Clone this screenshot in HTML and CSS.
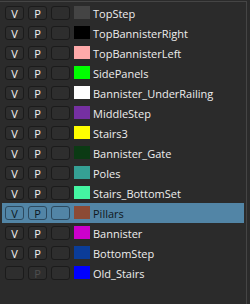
FILE: index.html
```html
<!DOCTYPE html>
<html>
<head>
<meta charset="utf-8">
<link rel="stylesheet" href="styles.css">
</head>
<body>
<div class="panel">
  <div class="list">
    <div class="row"><span class="btn">V</span><span class="btn">P</span><span class="btn"></span><span class="swatch" style="background:#444444"></span><span class="name">TopStep</span></div>
    <div class="row"><span class="btn">V</span><span class="btn">P</span><span class="btn"></span><span class="swatch" style="background:#000000"></span><span class="name">TopBannisterRight</span></div>
    <div class="row"><span class="btn">V</span><span class="btn">P</span><span class="btn"></span><span class="swatch" style="background:#ffaaaa"></span><span class="name">TopBannisterLeft</span></div>
    <div class="row"><span class="btn">V</span><span class="btn">P</span><span class="btn"></span><span class="swatch" style="background:#00ff00"></span><span class="name">SidePanels</span></div>
    <div class="row"><span class="btn">V</span><span class="btn">P</span><span class="btn"></span><span class="swatch" style="background:#ffffff"></span><span class="name">Bannister_UnderRailing</span></div>
    <div class="row"><span class="btn">V</span><span class="btn">P</span><span class="btn"></span><span class="swatch" style="background:#7530a2"></span><span class="name">MiddleStep</span></div>
    <div class="row"><span class="btn">V</span><span class="btn">P</span><span class="btn"></span><span class="swatch" style="background:#ffff00"></span><span class="name">Stairs3</span></div>
    <div class="row"><span class="btn">V</span><span class="btn">P</span><span class="btn"></span><span class="swatch" style="background:#0b3a14"></span><span class="name">Bannister_Gate</span></div>
    <div class="row"><span class="btn">V</span><span class="btn">P</span><span class="btn"></span><span class="swatch" style="background:#35a094"></span><span class="name">Poles</span></div>
    <div class="row"><span class="btn">V</span><span class="btn">P</span><span class="btn"></span><span class="swatch" style="background:#44f5a2"></span><span class="name">Stairs_BottomSet</span></div>
    <div class="row selected"><span class="btn">V</span><span class="btn">P</span><span class="btn"></span><span class="swatch" style="background:#8c4a35"></span><span class="name">Pillars</span></div>
    <div class="row"><span class="btn">V</span><span class="btn">P</span><span class="btn"></span><span class="swatch" style="background:#cc00cc"></span><span class="name">Bannister</span></div>
    <div class="row"><span class="btn">V</span><span class="btn">P</span><span class="btn"></span><span class="swatch" style="background:#0b3c98"></span><span class="name">BottomStep</span></div>
    <div class="row"><span class="btn"></span><span class="btn dim">P</span><span class="btn"></span><span class="swatch" style="background:#0000ff"></span><span class="name">Old_Stairs</span></div>
  </div>
</div>
</body>
</html>
```

FILE: styles.css
```css
html, body {
  margin: 0;
  padding: 0;
  background: #2b2b2b;
  width: 250px;
  height: 304px;
  overflow: hidden;
  font-family: "Open Sans", "DejaVu Sans", sans-serif;
  font-size: 11px;
}
.panel {
  margin-top: 1px;
  width: 247px;
  height: 310px;
  border-top: 1px solid #454545;
  border-right: 1px solid #454545;
  box-sizing: border-box;
  padding: 1px 2px 0 2px;
}
.list {
  display: flex;
  flex-direction: column;
}
.row {
  height: 20px;
  display: flex;
  align-items: center;
  padding-left: 3px;
  gap: 4px;
  color: #eeeeee;
}
.btn {
  width: 19px;
  height: 14px;
  box-sizing: border-box;
  border: 1px solid #1b1b1b;
  border-radius: 3px;
  background: #2e2e2e;
  display: flex;
  align-items: center;
  justify-content: center;
  color: #f2f2f2;
  font-size: 11px;
  line-height: 1;
}
.btn.dim {
  color: #4e4e4e;
}
.swatch {
  width: 16px;
  height: 13px;
  margin-top: -1px;
}
.name {
  margin-left: -1px;
  white-space: nowrap;
  line-height: 1;
}
.row.selected {
  background: #5285a6;
  color: #101820;
}
.row.selected .btn {
  background: #5285a6;
  border-color: #2c4a60;
  color: #0c1622;
}
```
